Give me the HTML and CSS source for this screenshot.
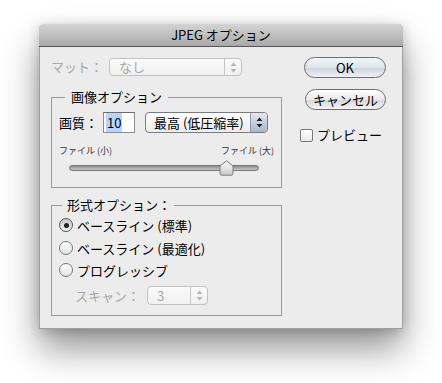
FILE: index.html
```html
<!DOCTYPE html>
<html lang="ja">
<head>
  <meta charset="UTF-8" />
  <title>JPEG オプション</title>
  <link rel="stylesheet" href="styles.css">
</head>
<body>

  <div class="desktop">
  <div class="window">
    <div class="titlebar">JPEG オプション</div>

    <div class="content">
      <div class="main">

        <div class="row matte">
          <span class="label dim">マット：</span>
          <div class="popup disabled matte-popup">
            <span class="value">なし</span>
            <span class="arrows">
              <svg width="7" height="11" viewBox="0 0 7 11"><path d="M3.5 0.5 L6.5 4 H0.5 Z M3.5 10.5 L6.5 7 H0.5 Z" fill="#b5b5b5"/></svg>
            </span>
          </div>
        </div>

        <div class="group quality-group">
          <span class="legend">画像オプション</span>
          <div class="row quality">
            <span class="label">画質：</span>
            <div class="textbox"><span class="selected">10</span></div>
            <div class="popup quality-popup">
              <span class="value">最高 (低圧縮率)</span>
              <span class="arrows blue">
                <svg width="7" height="11" viewBox="0 0 7 11"><path d="M3.5 0.5 L6.5 4 H0.5 Z M3.5 10.5 L6.5 7 H0.5 Z" fill="#222"/></svg>
              </span>
            </div>
          </div>
          <div class="slider-labels">
            <span>ファイル (小)</span>
            <span>ファイル (大)</span>
          </div>
          <div class="slider">
            <div class="track"></div>
            <svg class="thumb" width="15" height="16" viewBox="0 0 15 16">
              <defs>
                <linearGradient id="thumbFill" x1="0" y1="0" x2="0" y2="1">
                  <stop offset="0" stop-color="#ffffff"/>
                  <stop offset="1" stop-color="#c9c9c9"/>
                </linearGradient>
              </defs>
              <path d="M7.5 0.8 L14 6 V13.5 Q14 15.2 12.3 15.2 H2.7 Q1 15.2 1 13.5 V6 Z" fill="url(#thumbFill)" stroke="#7a7a7a" stroke-width="1"/>
            </svg>
          </div>
        </div>

        <div class="group format-group">
          <span class="legend">形式オプション：</span>
          <label class="radio-row first"><span class="radio checked"><span class="dot"></span></span>ベースライン (標準)</label>
          <label class="radio-row"><span class="radio"></span>ベースライン (最適化)</label>
          <label class="radio-row last"><span class="radio"></span>プログレッシブ</label>
          <div class="row scan">
            <span class="label dim">スキャン：</span>
            <div class="popup disabled scan-popup">
              <span class="value">3</span>
              <span class="arrows">
                <svg width="7" height="11" viewBox="0 0 7 11"><path d="M3.5 0.5 L6.5 4 H0.5 Z M3.5 10.5 L6.5 7 H0.5 Z" fill="#b5b5b5"/></svg>
              </span>
            </div>
          </div>
        </div>

      </div>

      <div class="side">
        <button class="aqua ok">OK</button>
        <button class="aqua cancel">キャンセル</button>
        <label class="check-row"><span class="checkbox"></span>プレビュー</label>
      </div>
    </div>
  </div>
  </div>

</body>
</html>
```

FILE: styles.css
```css
body {
  margin: 0;
  background-color: #ffffff;
  font-family: "Noto Sans CJK JP", sans-serif;
  font-size: 13px;
  color: #000;
}

.desktop {
  height: 383px;
  padding: 24px 0 0 39px;
  box-sizing: border-box;
  overflow: hidden;
}

.window {
  width: 364px;
  height: 305px;
  box-sizing: border-box;
  background-color: #ececec;
  border: 1px solid #a0a0a0;
  border-top: none;
  border-radius: 5px 5px 0 0;
  box-shadow: 0 20px 36px rgba(0, 0, 0, 0.42), 0 2px 12px rgba(0, 0, 0, 0.18);
}

.titlebar {
  height: 22px;
  line-height: 22px;
  text-align: center;
  font-size: 13px;
  background: linear-gradient(#d4d4d4, #a9a9a9);
  border-bottom: 1px solid #555;
  border-radius: 5px 5px 0 0;
  margin: 0 -1px;
}

.content {
  display: flex;
  padding: 11px 0 0 11px;
}

.main {
  width: 231px;
}

.row {
  display: flex;
  align-items: center;
}

.label {
  line-height: 16px;
}

.dim {
  color: #a8a8a8;
}

/* pop-up menus */
.popup {
  display: flex;
  align-items: center;
  box-sizing: border-box;
  border: 1px solid #8a8a8a;
  border-radius: 4px;
  background: linear-gradient(#ffffff, #ececec);
  overflow: hidden;
}
.popup .value {
  flex: 1;
  padding-left: 9px;
  line-height: 16px;
}
.popup .arrows {
  width: 16px;
  align-self: stretch;
  display: flex;
  align-items: center;
  justify-content: center;
  border-left: 1px solid #c4c4c4;
}
.popup .arrows.blue {
  background: linear-gradient(#e4e9f1, #aab6c8);
  border-left-color: #8d98a8;
}
.popup.disabled {
  border-color: #c2c2c2;
  background: linear-gradient(#fbfbfb, #f0f0f0);
  color: #a8a8a8;
}

.matte .label {
  width: 58px;
}
.matte-popup {
  width: 133px;
  height: 18px;
}

/* group boxes */
.group {
  border: 1px solid #9a9a9a;
  padding: 0 7px;
}
.legend {
  display: block;
  width: fit-content;
  margin-top: -9px;
  margin-left: 6px;
  padding: 0 6px;
  line-height: 16px;
  background-color: #ececec;
}

.quality-group {
  margin-top: 21px;
  height: 89px;
}
.quality {
  margin-top: 7px;
}
.quality .label {
  width: 44px;
}
.textbox {
  box-sizing: border-box;
  width: 32px;
  height: 21px;
  border: 1px solid #8c8c8c;
  border-top-color: #6c6c6c;
  background-color: #fff;
  padding: 2px 0 0 2px;
  line-height: 16px;
  font-size: 13px;
}
.selected {
  background-color: #b5d5ff;
  padding: 0 1px;
}
.quality-popup {
  margin-left: 10px;
  width: 123px;
  height: 21px;
  border-color: #7c7c7c;
}
.quality-popup .value {
  padding-left: 8px;
}

.slider-labels {
  display: flex;
  justify-content: space-between;
  margin-top: 12px;
  font-size: 9px;
  line-height: 12px;
  color: #333;
}

.slider {
  position: relative;
  margin: 3px 15px 0 10px;
  height: 16px;
}
.track {
  position: relative;
  top: 5px;
  height: 4px;
  border: 1px solid #7a7a7a;
  border-radius: 3px;
  background: linear-gradient(#8e8e8e, #c8c8c8);
}
.thumb {
  position: absolute;
  left: 150px;
  top: 0;
}

.format-group {
  margin-top: 17px;
  height: 109px;
}
.format-group .legend {
  margin-left: 3px;
  padding: 0 3px 0 5px;
}
.radio-row {
  display: flex;
  align-items: center;
  height: 22px;
  margin-top: 1px;
}
.radio-row.last {
  margin-top: 0;
}
.radio {
  box-sizing: border-box;
  width: 14px;
  height: 14px;
  margin-right: 4px;
  border: 1px solid #777;
  border-radius: 50%;
  background: linear-gradient(#ffffff, #e4e4e4);
  display: flex;
  align-items: center;
  justify-content: center;
}
.radio.checked {
  background: linear-gradient(#c8c8c8, #f0f0f0);
  border-color: #555;
}
.radio .dot {
  width: 5px;
  height: 5px;
  border-radius: 50%;
  background-color: #222;
}

.scan {
  margin-top: 5px;
  padding-left: 16px;
}
.scan .label {
  width: 72px;
}
.scan-popup {
  width: 61px;
  height: 19px;
}

/* right column */
.side {
  margin-left: 22px;
  width: 82px;
  display: flex;
  flex-direction: column;
}
.aqua {
  box-sizing: border-box;
  height: 21px;
  width: 82px;
  padding: 0;
  border: 1px solid #6e6e6e;
  border-radius: 11px;
  background: linear-gradient(#ffffff 0%, #e9e9e9 50%, #d6d6d6 51%, #f4f4f4 100%);
  font-family: "Noto Sans CJK JP", sans-serif;
  font-size: 13px;
  line-height: 19px;
  color: #000;
}
.ok {
  margin-top: -1px;
  background: linear-gradient(#f4f6fa 0%, #dfe4ec 50%, #cdd3dd 51%, #eef1f6 100%);
}
.cancel {
  margin-top: 11px;
  margin-left: 1px;
  width: 81px;
}
.check-row {
  display: flex;
  align-items: center;
  margin-top: 17px;
  margin-left: -4px;
  line-height: 16px;
}
.checkbox {
  box-sizing: border-box;
  width: 13px;
  height: 13px;
  margin-right: 4px;
  border: 1px solid #777;
  border-radius: 2px;
  background: linear-gradient(#ffffff, #e8e8e8);
}
```
